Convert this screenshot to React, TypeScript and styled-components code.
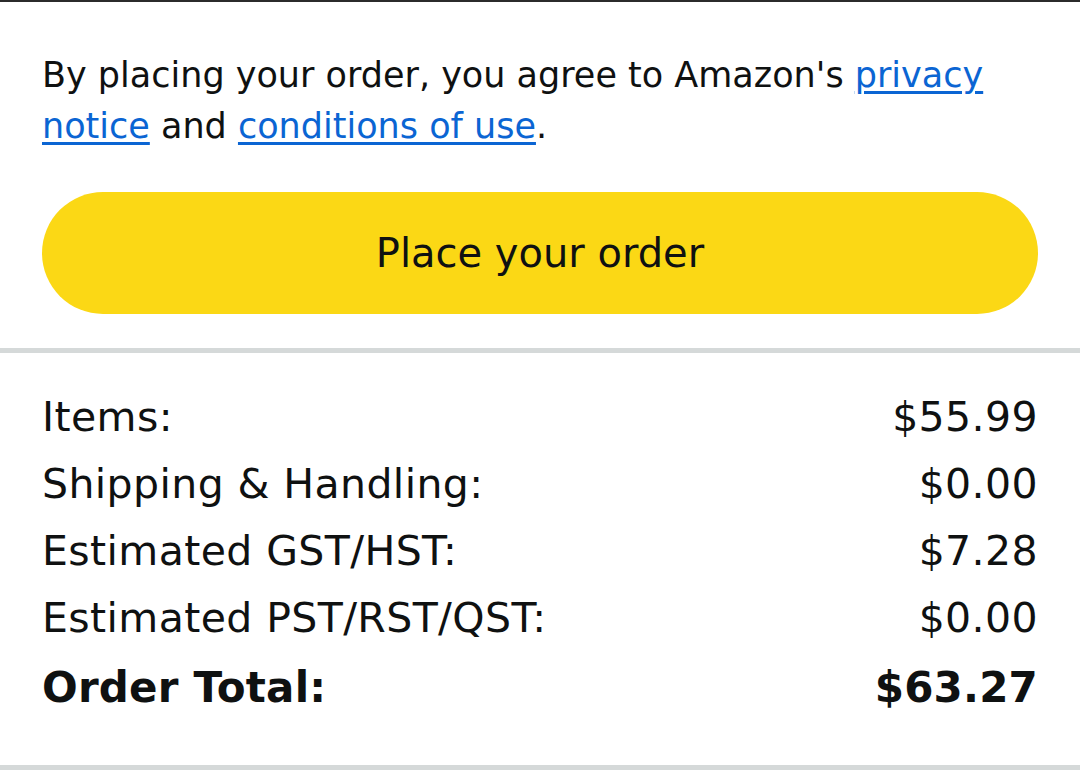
import styled, { createGlobalStyle } from 'styled-components';

const GlobalStyle = createGlobalStyle`
  html, body {
    margin: 0;
    padding: 0;
    background: #ffffff;
  }
  body {
    font-family: 'DejaVu Sans', 'Liberation Sans', sans-serif;
    color: #0f1111;
  }
`;

const summary = [
  { label: 'Items:', value: '$55.99' },
  { label: 'Shipping & Handling:', value: '$0.00' },
  { label: 'Estimated GST/HST:', value: '$7.28' },
  { label: 'Estimated PST/RST/QST:', value: '$0.00' },
];

export default function App() {
  return (
    <Page>
      <GlobalStyle />
      <PlaceOrderSection>
        <Notice>
          By placing your order, you agree to Amazon's <Link href="#">privacy notice</Link> and{' '}
          <Link href="#">conditions of use</Link>.
        </Notice>
        <PlaceOrderButton type="button">Place your order</PlaceOrderButton>
      </PlaceOrderSection>
      <Divider />
      <SummarySection>
        {summary.map((row) => (
          <Row key={row.label}>
            <span>{row.label}</span>
            <span>{row.value}</span>
          </Row>
        ))}
        <Row $total>
          <span>Order Total:</span>
          <span>$63.27</span>
        </Row>
      </SummarySection>
      <Divider />
    </Page>
  );
}

const Page = styled.div`
  width: 1080px;
  min-height: 778px;
  border-top: 2px solid #2b2b2b;
  box-sizing: border-box;
  overflow: hidden;
`;

const PlaceOrderSection = styled.section`
  display: flex;
  flex-direction: column;
  gap: 40px;
  padding: 48px 42px 34px;
`;

const Notice = styled.p`
  margin: 0;
  font-size: 35px;
  line-height: 51px;
  color: #0f1111;
`;

const Link = styled.a`
  color: #0b65d3;
  text-decoration: underline;
  text-decoration-thickness: 3px;
  text-underline-offset: 4px;
`;

const PlaceOrderButton = styled.button`
  height: 122px;
  width: 100%;
  border: none;
  border-radius: 61px;
  background: #fbd815;
  font-family: inherit;
  font-size: 40px;
  color: #0f1111;
  cursor: pointer;
`;

const Divider = styled.div`
  height: 5px;
  background: #d5d9d9;
`;

const SummarySection = styled.section`
  display: flex;
  flex-direction: column;
  padding: 31px 42px 41px;
`;

const Row = styled.div<{ $total?: boolean }>`
  display: flex;
  justify-content: space-between;
  align-items: baseline;
  font-size: ${(p) => (p.$total ? '42px' : '41px')};
  font-weight: ${(p) => (p.$total ? 700 : 400)};
  letter-spacing: ${(p) => (p.$total ? '0.2px' : '0.4px')};
  line-height: ${(p) => (p.$total ? '72px' : '67px')};
  color: #0f1111;
`;
